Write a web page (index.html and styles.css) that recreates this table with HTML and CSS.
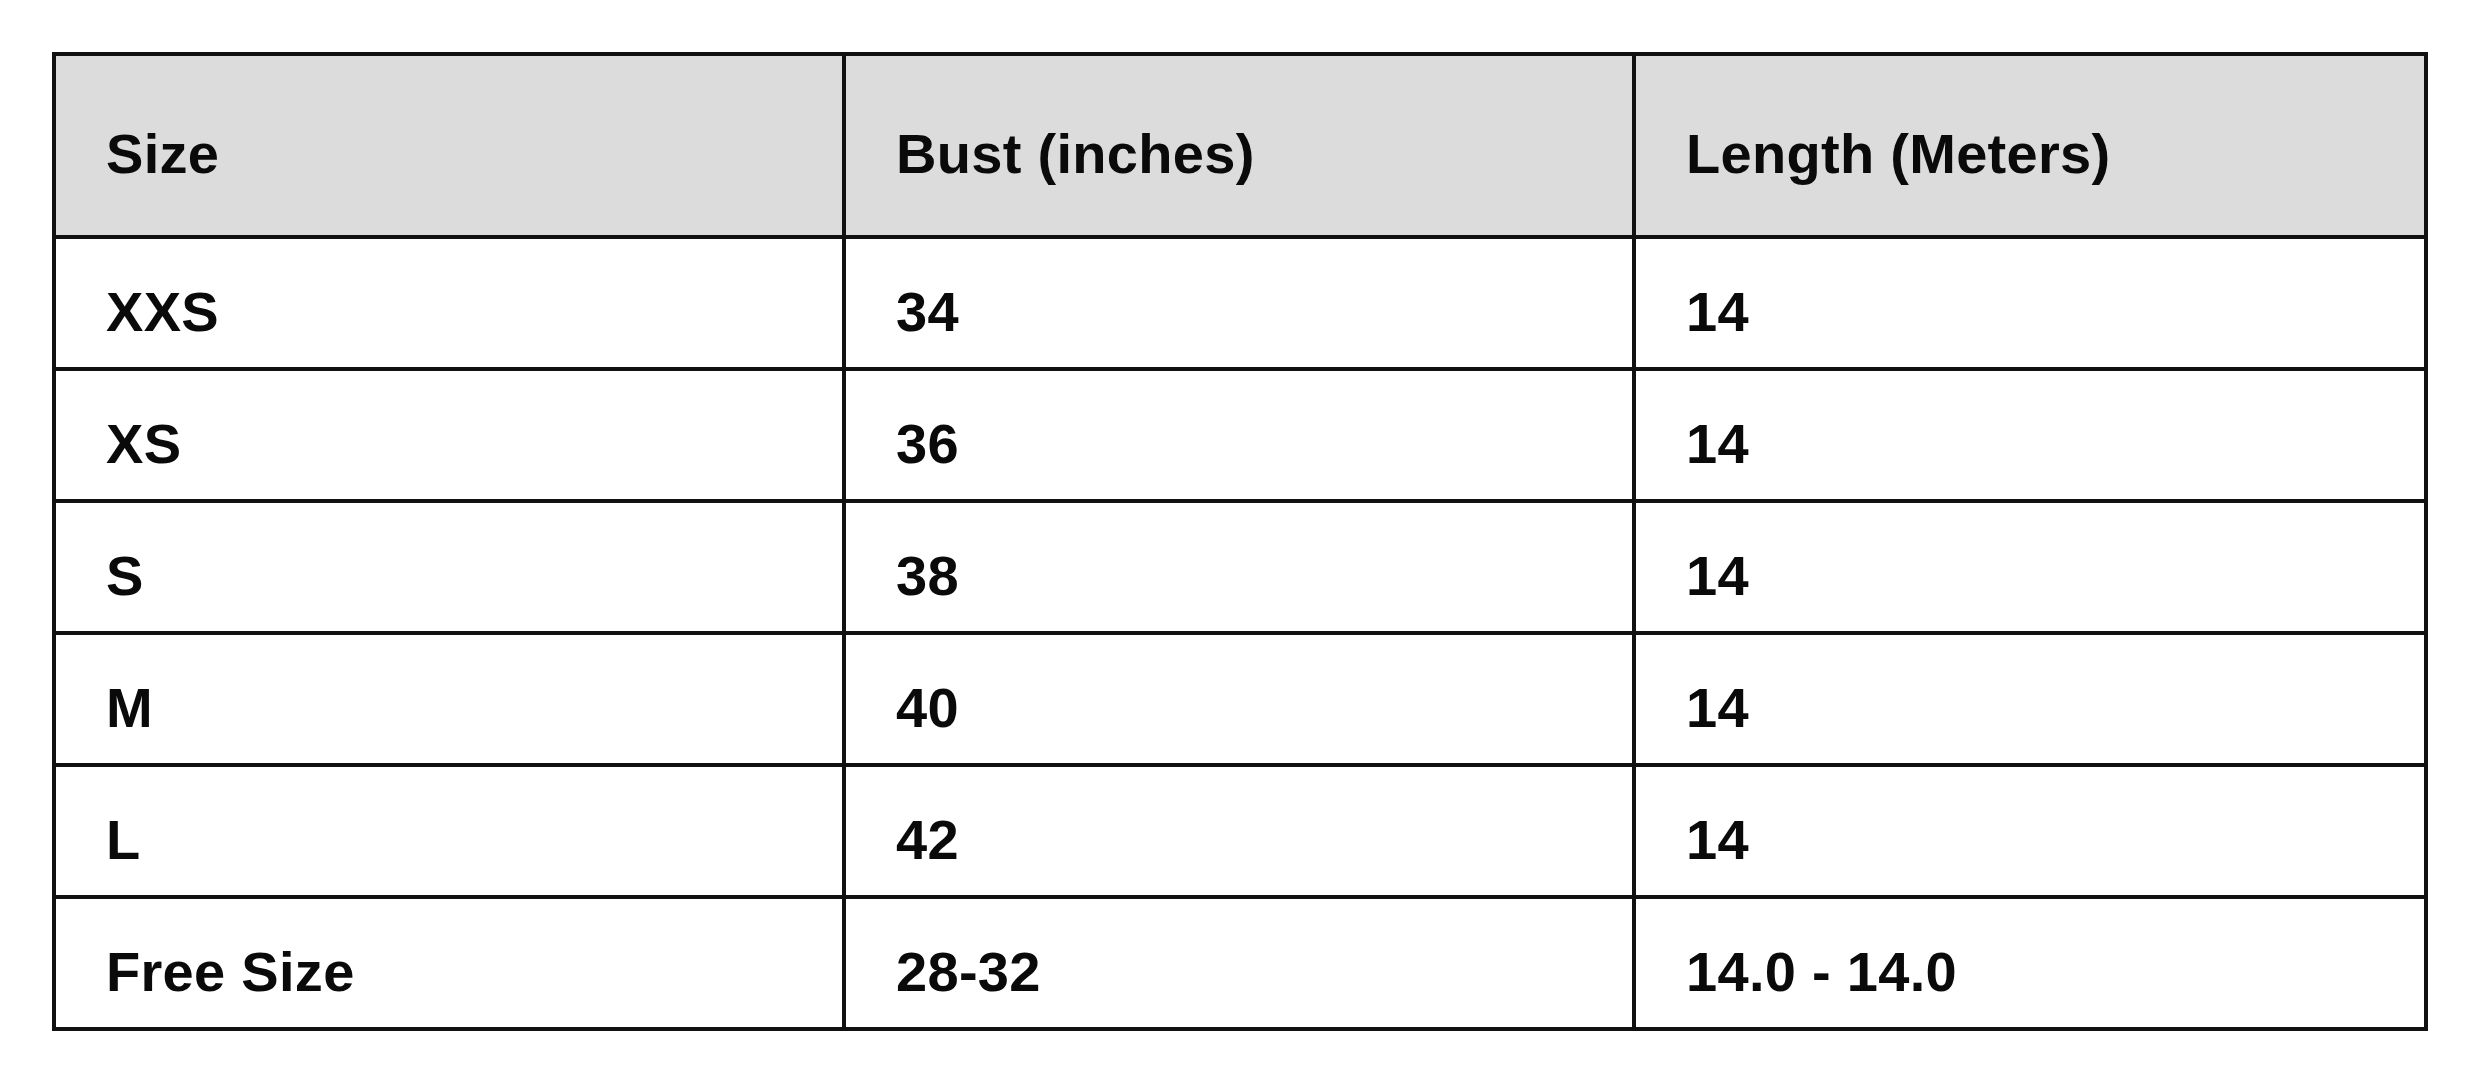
FILE: index.html
```html
<!DOCTYPE html>
<html lang="en">
<head>
<meta charset="utf-8">
<title>Size Chart</title>
<link rel="stylesheet" href="styles.css">
</head>
<body>
<table class="size-table">
  <colgroup>
    <col class="col-a">
    <col class="col-b">
    <col class="col-c">
  </colgroup>
  <thead>
    <tr class="head-row">
      <th>Size</th>
      <th>Bust (inches)</th>
      <th>Length (Meters)</th>
    </tr>
  </thead>
  <tbody>
    <tr><td>XXS</td><td>34</td><td>14</td></tr>
    <tr><td>XS</td><td>36</td><td>14</td></tr>
    <tr><td>S</td><td>38</td><td>14</td></tr>
    <tr><td>M</td><td>40</td><td>14</td></tr>
    <tr><td>L</td><td>42</td><td>14</td></tr>
    <tr><td>Free Size</td><td>28-32</td><td>14.0 - 14.0</td></tr>
  </tbody>
</table>
</body>
</html>
```
FILE: styles.css
```css
html, body {
  margin: 0;
  padding: 0;
  background: #ffffff;
}

body {
  padding: 52px 0 0 52px;
  font-family: "Liberation Sans", Arial, sans-serif;
  color: #0a0a0a;
}

.size-table {
  width: 2376px;
  table-layout: fixed;
  border-collapse: separate;
  border-spacing: 0;
  border-top: 4px solid #111;
  border-left: 4px solid #111;
}

.col-a { width: 790px; }
.col-b { width: 790px; }
.col-c { width: 792px; }

.size-table th,
.size-table td {
  box-sizing: border-box;
  border-right: 4px solid #111;
  border-bottom: 4px solid #111;
  padding: 0 0 0 50px;
  text-align: left;
  vertical-align: top;
  font-size: 56px;
  line-height: 56px;
  font-weight: 700;
  letter-spacing: 0.3px;
  white-space: nowrap;
}

.head-row th {
  background: #dcdcdc;
  height: 183px;
  padding-top: 70px;
}

.size-table td {
  height: 132px;
  padding-top: 45px;
}
```
